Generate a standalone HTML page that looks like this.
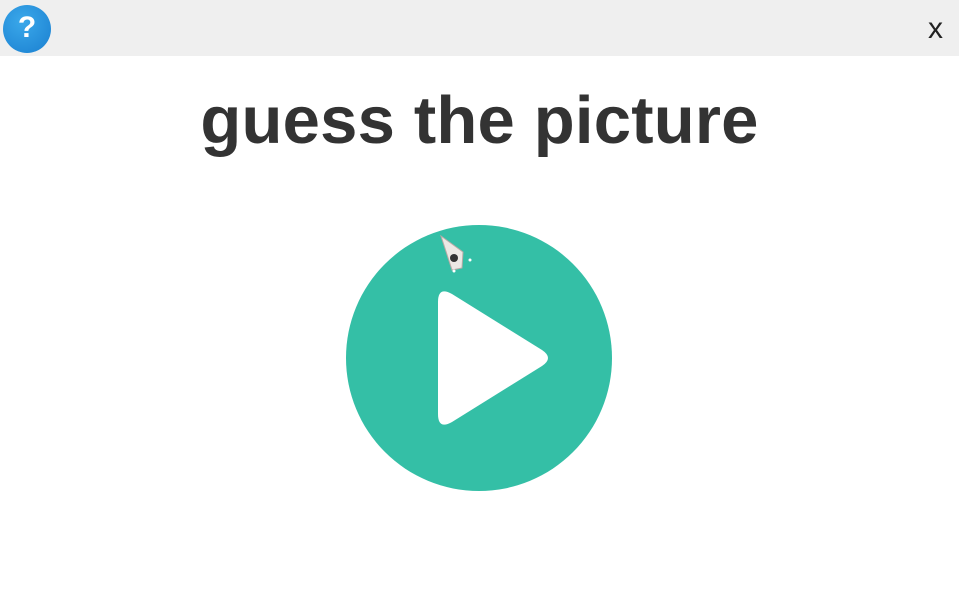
<!DOCTYPE html>
<html><head><style>
body{margin:0;width:959px;height:593px;background:#fff;overflow:hidden;position:relative;font-family:"Liberation Sans",sans-serif}
.hdr{position:absolute;left:0;top:0;width:959px;height:56px;background:#efefef}
.q{position:absolute;left:3px;top:5px;width:48px;height:48px;border-radius:50%;background:radial-gradient(circle at 40% 35%,#3aa8ea,#1a7fd0);color:#fff;font-weight:bold;font-size:30px;text-align:center;line-height:46px}
.x{position:absolute;left:928px;top:12px;font-size:30px;color:#222}
h1{position:absolute;left:0;width:959px;top:82px;margin:0;text-align:center;font-size:67px;font-weight:bold;color:#333;letter-spacing:0.2px}
</style></head><body>
<div class="hdr"></div>
<div class="q">?</div>
<div class="x">x</div>
<h1>guess the picture</h1>
<svg style="position:absolute;left:0;top:0" width="959" height="593">
<circle cx="479" cy="358" r="133" fill="#34bfa6"/>
<path d="M452 294 Q438 286 438 302 L438 414 Q438 430 452 422 L542 366 Q554 358 542 350 Z" fill="#fff"/>
<path d="M441 236 L463 252 L462 268 L452 270 Z" fill="#ece8e4" stroke="#b9aaa6" stroke-width="1"/>
<circle cx="454" cy="258" r="4" fill="#333"/>
<circle cx="470" cy="260" r="1.5" fill="#fff"/>
<circle cx="454" cy="271" r="1.5" fill="#fff"/>
</svg>
</body></html>
